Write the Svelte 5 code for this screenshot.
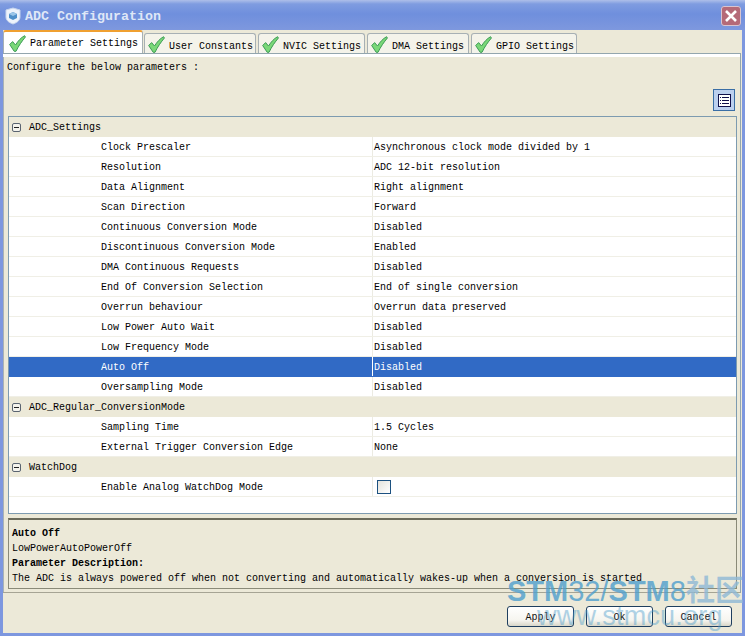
<script>
  const tabs = [
    { label: 'Parameter Settings', active: true },
    { label: 'User Constants' },
    { label: 'NVIC Settings' },
    { label: 'DMA Settings' },
    { label: 'GPIO Settings' }
  ];
  const groups = [
    { name: 'ADC_Settings', rows: [
      ['Clock Prescaler', 'Asynchronous clock mode divided by 1'],
      ['Resolution', 'ADC 12-bit resolution'],
      ['Data Alignment', 'Right alignment'],
      ['Scan Direction', 'Forward'],
      ['Continuous Conversion Mode', 'Disabled'],
      ['Discontinuous Conversion Mode', 'Enabled'],
      ['DMA Continuous Requests', 'Disabled'],
      ['End Of Conversion Selection', 'End of single conversion'],
      ['Overrun behaviour', 'Overrun data preserved'],
      ['Low Power Auto Wait', 'Disabled'],
      ['Low Frequency Mode', 'Disabled'],
      ['Auto Off', 'Disabled', 'sel'],
      ['Oversampling Mode', 'Disabled']
    ]},
    { name: 'ADC_Regular_ConversionMode', rows: [
      ['Sampling Time', '1.5 Cycles'],
      ['External Trigger Conversion Edge', 'None']
    ]},
    { name: 'WatchDog', rows: [
      ['Enable Analog WatchDog Mode', null]
    ]}
  ];
</script>

<div class="win">
  <header class="title">
    <svg class="logo" width="16" height="18" viewBox="0 0 16 18">
      <path d="M8 1 L15 3 V10 C15 14 11 16 8 17 C5 16 1 14 1 10 V3 Z" fill="#eef3fb" stroke="#c7d5ee"/>
      <path d="M8 5 L12 7 V11 L8 13 L4 11 V7 Z" fill="#4f8fc9"/>
      <path d="M8 5 L12 7 L8 9 L4 7 Z" fill="#9cc6e8"/>
    </svg>
    <span class="title-text">ADC Configuration</span>
    <button class="close" aria-label="Close">
      <svg width="14" height="14" viewBox="0 0 14 14"><path d="M2 2 L12 12 M12 2 L2 12" stroke="#fff" stroke-width="2.6"/></svg>
    </button>
  </header>

  <div class="body">
    <nav class="tabs">
      {#each tabs as t}
        <div class="tab" class:active={t.active}>
          <svg class="check" width="17" height="17" viewBox="0 0 17 17">
            <path d="M0.7 9.5 L3.6 6.6 L6.5 10 C9 6 12 2.6 15.6 0.7 L16.4 2 C13 6 9.5 11 7 16.3 L5.2 16.3 Z" fill="#7ad878" stroke="#3c9a55" stroke-width="1"/>
          </svg>
          <span>{t.label}</span>
        </div>
      {/each}
    </nav>

    <section class="panel">
      <p class="hint">Configure the below parameters :</p>
      <div class="toolbar">
        <button class="listbtn" aria-label="List view">
          <svg width="13" height="13" viewBox="0 0 13 13">
            <rect x="0.5" y="0.5" width="12" height="12" fill="#fff" stroke="#10104a"/>
            <path d="M2 3.5 H3 M4 3.5 H11 M2 6.5 H3 M4 6.5 H11 M2 9.5 H3 M4 9.5 H11" stroke="#10104a"/>
          </svg>
        </button>
      </div>

      <div class="table">
        {#each groups as g}
          <div class="group">
            <svg class="minus" width="9" height="9" viewBox="0 0 9 9">
              <rect x="0.5" y="0.5" width="8" height="8" rx="1.5" fill="#f4f3ec" stroke="#5a6470"/>
              <path d="M2 4.5 H7" stroke="#222"/>
            </svg>
            <span class="txt">{g.name}</span>
          </div>
          {#each g.rows as r}
            <div class="row" class:sel={r[2] === 'sel'}>
              <div class="cell name"><span class="txt">{r[0]}</span></div>
              <div class="cell value">
                {#if r[1] === null}
                  <span class="cb"></span>
                {:else}
                  <span class="txt">{r[1]}</span>
                {/if}
              </div>
            </div>
          {/each}
        {/each}
      </div>

      <div class="desc">
        <div class="b">Auto Off</div>
        <div>LowPowerAutoPowerOff</div>
        <div class="b">Parameter Description:</div>
        <div>The ADC is always powered off when not converting and automatically wakes-up when a conversion is started</div>
      </div>
    </section>

    <footer class="foot">
      <button class="btn">Apply</button>
      <button class="btn">Ok</button>
      <button class="btn">Cancel</button>
    </footer>
  </div>

  <div class="mark" aria-hidden="true">
    <div class="m1"><b>STM</b>32/<b>STM</b>8<b class="cn">社区</b></div>
    <div class="m2">www.stmcu.org</div>
  </div>
</div>

<style>
  :global(body) { margin: 0; background: #7a96df; }
  .win {
    position: relative;
    width: 745px;
    height: 636px;
    overflow: hidden;
    box-sizing: border-box;
    padding: 0 3px 3px 3px;
    background: #7d97df;
    font: 10px/12px "Liberation Mono", "DejaVu Sans Mono", monospace;
    color: #000;
    display: flex;
    flex-direction: column;
  }
  .title {
    height: 30px;
    flex: none;
    margin: 0 -3px;
    padding: 2px 0 0 5px;
    box-sizing: border-box;
    display: flex;
    align-items: center;
    gap: 4px;
    background: linear-gradient(#aebfe9 0, #7f9ce0 4px, #6f8fdd 14px, #7e98de 30px);
  }
  .title-text {
    position: relative;
    top: 1px;
    font: bold 13.33px/16px "Liberation Mono", monospace;
    color: #dfe7f7;
  }
  .close {
    margin-left: auto;
    margin-right: 4px;
    width: 20px;
    height: 20px;
    padding: 0;
    border: 1px solid #d8c4d0;
    border-radius: 3px;
    background: #b56a78;
    display: grid;
    place-items: center;
  }
  .body {
    flex: 1;
    min-height: 0;
    background: #ece9d8;
    display: flex;
    flex-direction: column;
  }
  .tabs {
    height: 23px;
    flex: none;
    display: flex;
    align-items: flex-end;
    gap: 2px;
  }
  .tab {
    height: 20px;
    box-sizing: border-box;
    padding: 0 2px 0 3px;
    border: 1px solid #a7b0b4;
    border-bottom: 0;
    border-radius: 3px 3px 0 0;
    background: #f4f3ea;
    display: flex;
    align-items: center;
    gap: 4px;
  }
  .tab:nth-child(3) { padding-right: 3px; }
  .tab:nth-child(4) { padding-right: 4px; }
  .check { margin-top: 1px; flex: none; }
  .tab span { position: relative; top: 3px; }
  .tab.active {
    height: 23px;
    margin: 0 -1px 0 0;
    padding-left: 5px;
    padding-right: 4px;
    background: #fff;
    border-color: #f0a030 #a7b0b4 #fff;
    border-top-width: 2px;
  }
  .tab.active span { top: 1px; }
  .tab:not(.active) { width: auto; }
  .panel {
    flex: none;
    height: 540px;
    margin-right: 1px;
    box-sizing: border-box;
    padding: 0 0 0 1px;
    border: 1px solid #93a6ae;
    border-left: 0;
    border-bottom-color: #a6a494;
    box-shadow: inset 0 3px 0 #fff, inset 1px 0 0 #a9b2b4;
    position: relative;
    display: flex;
    flex-direction: column;
  }
  .hint { margin: 8px 0 0 3px; height: 12px; }
  .toolbar {
    height: 22px;
    margin-top: 15px;
    padding-right: 5px;
    display: flex;
    justify-content: flex-end;
  }
  .listbtn {
    width: 22px;
    height: 22px;
    padding: 0;
    border: 1px solid #3a6ea5;
    background: #bcd0ee;
    display: grid;
    place-items: center;
  }
  .table {
    margin: 5px 3px 0 4px;
    height: 398px;
    flex: none;
    box-sizing: border-box;
    background: #fff;
    border: 1px solid #7d9bb0;
  }
  .txt { position: relative; top: 1px; }
  .group {
    height: 20px;
    display: flex;
    align-items: center;
    gap: 8px;
    padding-left: 3px;
    background: #ece9d8;
  }
  .row {
    height: 20px;
    box-sizing: border-box;
    display: flex;
    border-bottom: 1px solid #f0efe6;
    background: #fff;
  }
  .cell { line-height: 19px; box-sizing: border-box; }
  .name { width: 364px; padding-left: 92px; border-right: 1px solid #ecebe2; }
  .value { padding-left: 1px; flex: 1; display: flex; align-items: center; }
  .row.sel { background: #316ac5; color: #fff; border-bottom-color: #316ac5; }
  .row.sel .name { border-right-color: #fff; }
  .cb {
    width: 12px;
    height: 12px;
    margin-left: 3px;
    border: 1px solid #1c5180;
    background: linear-gradient(135deg, #e4e3dc, #fff);
  }
  .desc {
    margin: 4px 3px 0 4px;
    height: 71px;
    box-sizing: border-box;
    padding: 6px 0 0 3px;
    border: 1px solid #8a8a78;
    border-top: 2px solid #6b6b5a;
    white-space: nowrap;
    line-height: 15px;
  }
  .b { font-weight: bold; }
  .foot {
    flex: 1;
    display: flex;
    justify-content: flex-end;
    align-items: flex-start;
    gap: 12px;
    padding: 13px 10px 0 0;
  }
  .btn {
    width: 67px;
    height: 21px;
    padding: 2px 0 0;
    font: inherit;
    color: #111;
    border: 1px solid #1f3f5f;
    border-radius: 3px;
    background: linear-gradient(#fff 0, #f6f5ef 70%, #d8d6c8 100%);
  }
  .mark {
    position: absolute;
    left: 507px;
    top: 575px;
    color: #4f9fce;
    opacity: 0.8;
    font-family: "Liberation Sans", "Noto Sans CJK SC", sans-serif;
    white-space: nowrap;
    pointer-events: none;
  }
  .m1 { font-size: 29px; line-height: 32px; font-weight: 400; }
  .m1 b { font-weight: 700; }
  .m1 .cn { color: #8fb9d6; }
  .m2 { font-size: 27px; line-height: 24px; margin: -3px 0 0 30px; letter-spacing: 0.2px; opacity: 0.55; }
</style>
